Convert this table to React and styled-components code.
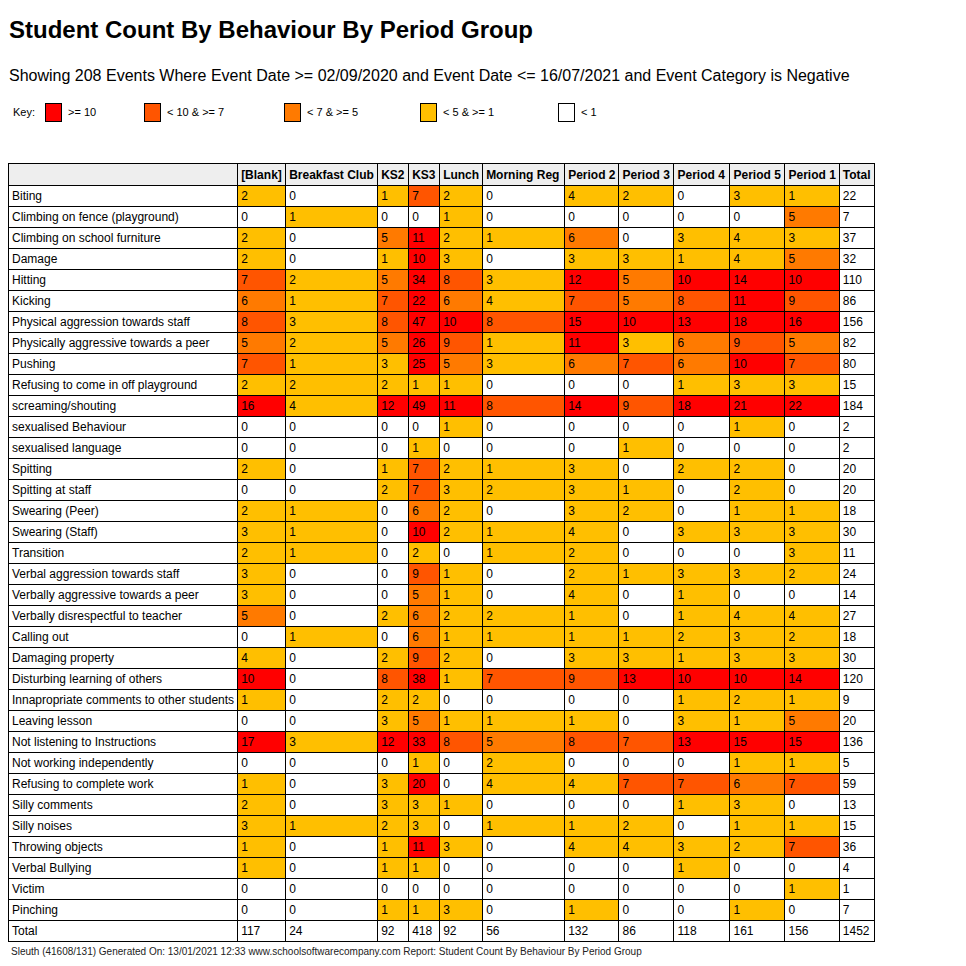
import styled, { createGlobalStyle } from "styled-components";

const GlobalStyle = createGlobalStyle`
  body {
    margin: 8px;
    background: #ffffff;
    font-family: "Liberation Sans", Arial, sans-serif;
    color: #000000;
  }
`;

// header text with the rendered column width (border included) from the report
const columns = [
  ["[Blank]", 48],
  ["Breakfast Club", 92],
  ["KS2", 31],
  ["KS3", 31],
  ["Lunch", 43],
  ["Morning Reg", 82],
  ["Period 2", 54],
  ["Period 3", 55],
  ["Period 4", 56],
  ["Period 5", 55],
  ["Period 1", 54],
];

const rows = [
  ["Biting", [2, 0, 1, 7, 2, 0, 4, 2, 0, 3, 1], 22],
  ["Climbing on fence (playground)", [0, 1, 0, 0, 1, 0, 0, 0, 0, 0, 5], 7],
  ["Climbing on school furniture", [2, 0, 5, 11, 2, 1, 6, 0, 3, 4, 3], 37],
  ["Damage", [2, 0, 1, 10, 3, 0, 3, 3, 1, 4, 5], 32],
  ["Hitting", [7, 2, 5, 34, 8, 3, 12, 5, 10, 14, 10], 110],
  ["Kicking", [6, 1, 7, 22, 6, 4, 7, 5, 8, 11, 9], 86],
  ["Physical aggression towards staff", [8, 3, 8, 47, 10, 8, 15, 10, 13, 18, 16], 156],
  ["Physically aggressive towards a peer", [5, 2, 5, 26, 9, 1, 11, 3, 6, 9, 5], 82],
  ["Pushing", [7, 1, 3, 25, 5, 3, 6, 7, 6, 10, 7], 80],
  ["Refusing to come in off playground", [2, 2, 2, 1, 1, 0, 0, 0, 1, 3, 3], 15],
  ["screaming/shouting", [16, 4, 12, 49, 11, 8, 14, 9, 18, 21, 22], 184],
  ["sexualised Behaviour", [0, 0, 0, 0, 1, 0, 0, 0, 0, 1, 0], 2],
  ["sexualised language", [0, 0, 0, 1, 0, 0, 0, 1, 0, 0, 0], 2],
  ["Spitting", [2, 0, 1, 7, 2, 1, 3, 0, 2, 2, 0], 20],
  ["Spitting at staff", [0, 0, 2, 7, 3, 2, 3, 1, 0, 2, 0], 20],
  ["Swearing (Peer)", [2, 1, 0, 6, 2, 0, 3, 2, 0, 1, 1], 18],
  ["Swearing (Staff)", [3, 1, 0, 10, 2, 1, 4, 0, 3, 3, 3], 30],
  ["Transition", [2, 1, 0, 2, 0, 1, 2, 0, 0, 0, 3], 11],
  ["Verbal aggression towards staff", [3, 0, 0, 9, 1, 0, 2, 1, 3, 3, 2], 24],
  ["Verbally aggressive towards a peer", [3, 0, 0, 5, 1, 0, 4, 0, 1, 0, 0], 14],
  ["Verbally disrespectful to teacher", [5, 0, 2, 6, 2, 2, 1, 0, 1, 4, 4], 27],
  ["Calling out", [0, 1, 0, 6, 1, 1, 1, 1, 2, 3, 2], 18],
  ["Damaging property", [4, 0, 2, 9, 2, 0, 3, 3, 1, 3, 3], 30],
  ["Disturbing learning of others", [10, 0, 8, 38, 1, 7, 9, 13, 10, 10, 14], 120],
  ["Innapropriate comments to other students", [1, 0, 2, 2, 0, 0, 0, 0, 1, 2, 1], 9],
  ["Leaving lesson", [0, 0, 3, 5, 1, 1, 1, 0, 3, 1, 5], 20],
  ["Not listening to Instructions", [17, 3, 12, 33, 8, 5, 8, 7, 13, 15, 15], 136],
  ["Not working independently", [0, 0, 0, 1, 0, 2, 0, 0, 0, 1, 1], 5],
  ["Refusing to complete work", [1, 0, 3, 20, 0, 4, 4, 7, 7, 6, 7], 59],
  ["Silly comments", [2, 0, 3, 3, 1, 0, 0, 0, 1, 3, 0], 13],
  ["Silly noises", [3, 1, 2, 3, 0, 1, 1, 2, 0, 1, 1], 15],
  ["Throwing objects", [1, 0, 1, 11, 3, 0, 4, 4, 3, 2, 7], 36],
  ["Verbal Bullying", [1, 0, 1, 1, 0, 0, 0, 0, 1, 0, 0], 4],
  ["Victim", [0, 0, 0, 0, 0, 0, 0, 0, 0, 0, 1], 1],
  ["Pinching", [0, 0, 1, 1, 3, 0, 1, 0, 0, 1, 0], 7],
];

const totals = [117, 24, 92, 418, 92, 56, 132, 86, 118, 161, 156];
const grandTotal = 1452;

const shades = {
  high: "#ff0000",
  upper: "#ff5500",
  mid: "#ff7a00",
  low: "#ffbf00",
  none: "#ffffff",
};

const bandFor = (n) => {
  if (n >= 10) return "high";
  if (n >= 7) return "upper";
  if (n >= 5) return "mid";
  if (n >= 1) return "low";
  return "none";
};

const legend = [
  { band: "high", label: ">= 10", width: 99 },
  { band: "upper", label: "< 10 & >= 7", width: 140 },
  { band: "mid", label: "< 7 & >= 5", width: 136 },
  { band: "low", label: "< 5 & >= 1", width: 138 },
  { band: "none", label: "< 1", width: 80 },
];

const Page = styled.div`
  width: 950px;
`;

const Title = styled.h1`
  margin: 8px 0 0 1px;
  font-size: 24px;
  font-weight: bold;
  line-height: 28px;
`;

const Subtitle = styled.p`
  margin: 23px 0 0 1px;
  font-size: 16px;
  line-height: 18px;
`;

const Legend = styled.div`
  display: flex;
  align-items: center;
  margin: 17px 0 0 5px;
  font-size: 11px;
  height: 20px;
`;

const LegendLabel = styled.span`
  width: 32px;
`;

const LegendItem = styled.div`
  display: flex;
  align-items: center;
  gap: 6px;
  width: ${(p) => p.$width}px;
`;

const Swatch = styled.span`
  display: inline-block;
  width: 15px;
  height: 17px;
  border: 1px solid #000;
  background: ${(p) => shades[p.$band]};
`;

const Table = styled.table`
  margin-top: 41px;
  border-collapse: collapse;
  font-size: 12px;
  line-height: 14px;
`;

const HeadCell = styled.th`
  background: #eeeeee;
  border: 1px solid #000;
  padding: 4px 3px 3px;
  text-align: left;
  font-weight: bold;
  white-space: nowrap;
  width: ${(p) => (p.$w ? `${p.$w - 7}px` : "auto")};
`;

const Cell = styled.td`
  border: 1px solid #000;
  padding: 3px 3px;
  text-align: left;
  white-space: nowrap;
  background: ${(p) => shades[p.$band || "none"]};
`;

const Footer = styled.div`
  margin: 4px 0 0 3px;
  font-size: 10px;
  color: #222;
`;

export default function App() {
  return (
    <Page>
      <GlobalStyle />
      <Title>Student Count By Behaviour By Period Group</Title>
      <Subtitle>
        Showing 208 Events Where Event Date &gt;= 02/09/2020 and Event Date &lt;= 16/07/2021 and
        Event Category is Negative
      </Subtitle>
      <Legend>
        <LegendLabel>Key:</LegendLabel>
        {legend.map((k) => (
          <LegendItem key={k.band} $width={k.width}>
            <Swatch $band={k.band} />
            <span>{k.label}</span>
          </LegendItem>
        ))}
      </Legend>
      <Table>
        <thead>
          <tr>
            <HeadCell $w={229} />
            {columns.map(([c, w]) => (
              <HeadCell key={c} $w={w}>
                {c}
              </HeadCell>
            ))}
            <HeadCell $w={34}>Total</HeadCell>
          </tr>
        </thead>
        <tbody>
          {rows.map(([name, values, total]) => (
            <tr key={name}>
              <Cell>{name}</Cell>
              {values.map((v, i) => (
                <Cell key={i} $band={bandFor(v)}>
                  {v}
                </Cell>
              ))}
              <Cell>{total}</Cell>
            </tr>
          ))}
          <tr>
            <Cell>Total</Cell>
            {totals.map((t, i) => (
              <Cell key={i}>{t}</Cell>
            ))}
            <Cell>{grandTotal}</Cell>
          </tr>
        </tbody>
      </Table>
      <Footer>
        Sleuth (41608/131) Generated On: 13/01/2021 12:33 www.schoolsoftwarecompany.com Report:
        Student Count By Behaviour By Period Group
      </Footer>
    </Page>
  );
}
